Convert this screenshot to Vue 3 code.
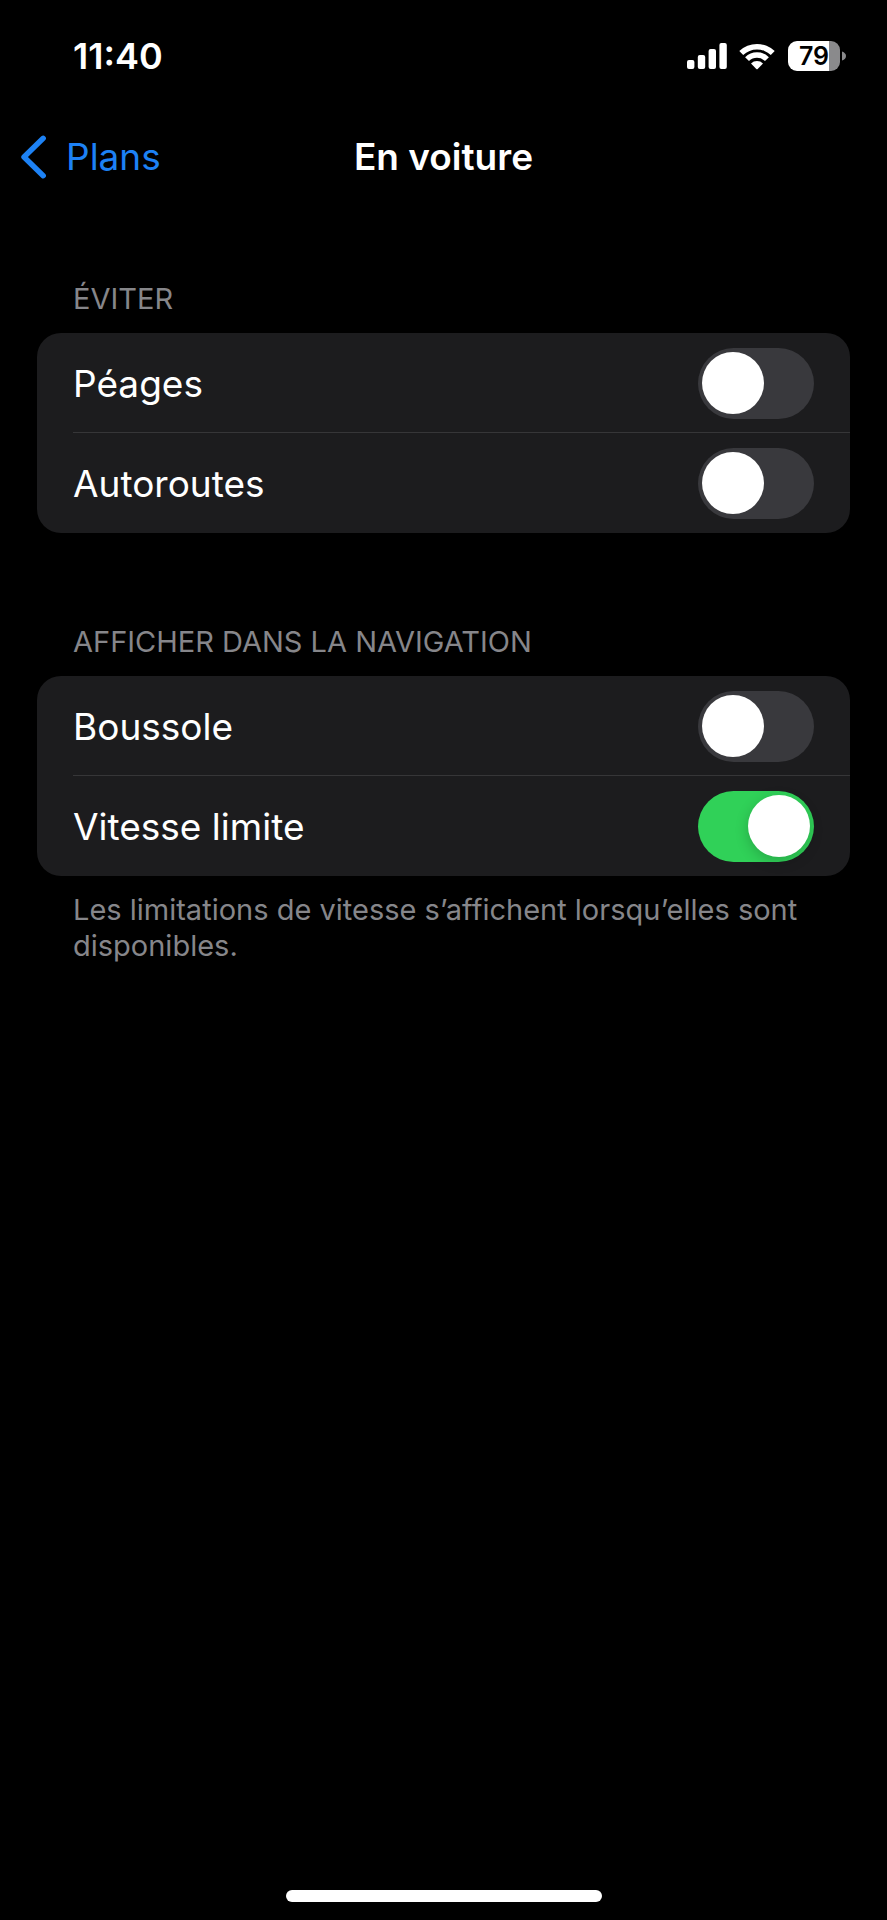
<script setup>
import { reactive } from 'vue'

const sections = reactive([
  {
    title: 'ÉVITER',
    rows: [
      { id: 'peages', label: 'Péages', on: false },
      { id: 'autoroutes', label: 'Autoroutes', on: false }
    ]
  },
  {
    title: 'AFFICHER DANS LA NAVIGATION',
    note: 'Les limitations de vitesse s’affichent lorsqu’elles sont disponibles.',
    rows: [
      { id: 'boussole', label: 'Boussole', on: false },
      { id: 'vitesse', label: 'Vitesse limite', on: true }
    ]
  }
])
</script>

<template>
  <div class="screen">
    <div class="status">
      <span class="time">11:40</span>
      <div class="indicators">
        <svg class="signal" viewBox="0 0 40 28" aria-hidden="true">
          <rect x="0" y="18" width="7.4" height="9" rx="2" />
          <rect x="10.8" y="13" width="7.4" height="14" rx="2" />
          <rect x="21.6" y="7" width="7.4" height="20" rx="2" />
          <rect x="32.4" y="1" width="7.4" height="26" rx="2" />
        </svg>
        <svg class="wifi" viewBox="0 0 38 28" aria-hidden="true">
          <path d="M1.3 9.1 A25.6 25.6 0 0 1 36.7 9.1 L32.8 13 A20 20 0 0 0 5.2 13 Z" />
          <path d="M7.1 15.2 A17 17 0 0 1 30.9 15.2 L27 19.1 A11.5 11.5 0 0 0 11 19.1 Z" />
          <path d="M13 21.5 A8.6 8.6 0 0 1 25 21.5 L19.7 26.9 Q19 27.6 18.3 26.9 Z" />
        </svg>
        <div class="battery">
          <span class="level">79</span>
          <svg class="tip" viewBox="0 0 4 10" aria-hidden="true">
            <path d="M0 0.5 Q4 2 4 5 Q4 8 0 9.5 Z" />
          </svg>
        </div>
      </div>
    </div>

    <header class="nav">
      <a class="back" href="#">
        <svg class="chevron" viewBox="0 0 26 44" aria-hidden="true">
          <path d="M23.2 3.3 L4 22 L23.2 40.7" />
        </svg>
        <span>Plans</span>
      </a>
      <h1 class="title">En voiture</h1>
    </header>

    <main class="content">
      <section v-for="section in sections" :key="section.title" class="section">
        <h2 class="heading">{{ section.title }}</h2>
        <div class="card">
          <label v-for="row in section.rows" :key="row.id" class="row" :for="row.id">
            <span class="label">{{ row.label }}</span>
            <input :id="row.id" v-model="row.on" class="switch" type="checkbox" role="switch" />
          </label>
        </div>
        <p v-if="section.note" class="note">{{ section.note }}</p>
      </section>
    </main>

    <div class="home"></div>
  </div>
</template>

<style>
body {
  background: #000;
}
</style>

<style scoped>
.screen {
  box-sizing: border-box;
  display: flex;
  flex-direction: column;
  min-height: 100vh;
  padding-bottom: 18px;
  background: #000;
  color: #fff;
  font-family: Inter, "Liberation Sans", sans-serif;
}

.status {
  display: flex;
  align-items: center;
  justify-content: space-between;
  height: 112px;
  padding: 0 41px 0 73px;
}

.time {
  font-size: 36px;
  font-weight: 600;
  line-height: 44px;
}

.indicators {
  display: flex;
  align-items: center;
}

.signal {
  width: 40px;
  height: 28px;
  margin-right: 11px;
  fill: #fff;
}

.wifi {
  width: 38px;
  height: 28px;
  margin-right: 12px;
  fill: #fff;
}

.battery {
  display: flex;
  align-items: center;
  gap: 2px;
}

.level {
  box-sizing: border-box;
  width: 52px;
  height: 30px;
  border-radius: 9px;
  background: linear-gradient(to right, #fff 41px, #8a8a8c 41px);
  color: #000;
  font-size: 25px;
  font-weight: 600;
  line-height: 30px;
  text-align: center;
}

.tip {
  width: 4px;
  height: 10px;
  fill: #8a8a8c;
}

.nav {
  display: grid;
  grid-template-columns: 1fr auto 1fr;
  align-items: center;
  height: 90px;
  padding: 0 20px;
}

.back {
  display: flex;
  align-items: center;
  gap: 20px;
  color: #1d82f5;
  font-size: 37px;
  line-height: 48px;
  text-decoration: none;
}

.chevron {
  width: 26px;
  height: 44px;
  fill: none;
  stroke: currentColor;
  stroke-width: 5.4;
  stroke-linecap: round;
  stroke-linejoin: round;
}

.title {
  margin: 0;
  font-size: 37px;
  font-weight: 600;
  line-height: 48px;
}

.content {
  display: flex;
  flex: 1;
  flex-direction: column;
  gap: 91px;
  padding: 79px 37px 0;
}

.heading {
  margin: 0 0 16px;
  padding: 0 36px;
  color: #86868a;
  font-size: 29px;
  font-weight: 400;
  line-height: 36px;
}

.card {
  overflow: hidden;
  border-radius: 24px;
  background: #1c1c1e;
}

.row {
  display: flex;
  position: relative;
  align-items: center;
  justify-content: space-between;
  height: 100px;
  padding: 0 36px;
}

.row + .row::before {
  position: absolute;
  top: -1px;
  right: 0;
  left: 36px;
  height: 1px;
  background: #363638;
  content: "";
}

.label {
  padding-top: 2px;
  font-size: 37px;
  line-height: 48px;
}

.switch {
  box-sizing: border-box;
  width: 116px;
  height: 71px;
  margin: 0;
  padding: 4px;
  border-radius: 36px;
  appearance: none;
  background: #39393d;
}

.switch::before {
  display: block;
  width: 62px;
  height: 62px;
  border-radius: 50%;
  background: #fff;
  content: "";
}

.switch:checked {
  background: #30d158;
}

.switch:checked::before {
  margin-left: auto;
  box-shadow: 0 4px 14px rgba(0, 0, 0, 0.2);
}

.note {
  margin: 16px 0 0;
  padding: 0 36px;
  color: #86868a;
  font-size: 29px;
  line-height: 36px;
}

.home {
  align-self: center;
  width: 316px;
  height: 12px;
  border-radius: 6px;
  background: #fff;
}
</style>
